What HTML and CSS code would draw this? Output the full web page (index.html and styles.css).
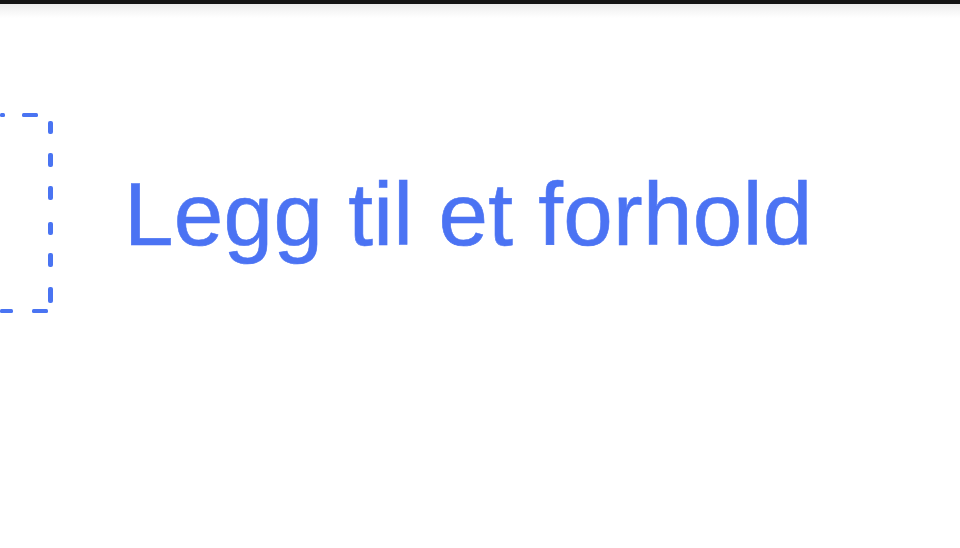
FILE: index.html
```html
<!DOCTYPE html>
<html lang="no">
<head>
<meta charset="utf-8">
<title>Legg til et forhold</title>
<link rel="stylesheet" href="styles.css">
</head>
<body>
<div class="topbar"></div>
<div class="band"></div>
<main class="row">
  <svg class="addbox" width="54" height="204" viewBox="0 0 54 204" aria-hidden="true">
    <g fill="#4a74f2">
      <rect x="0" y="1" width="5" height="4" rx="1.5"/>
      <rect x="22" y="1" width="16" height="4" rx="1.5"/>
      <rect x="48" y="9" width="5" height="13" rx="2"/>
      <rect x="48" y="41" width="5" height="14" rx="2"/>
      <rect x="48" y="74" width="5" height="14" rx="2"/>
      <rect x="48" y="110" width="5" height="13" rx="2"/>
      <rect x="48" y="141" width="5" height="14" rx="2"/>
      <rect x="48" y="175" width="5" height="16" rx="2"/>
      <rect x="0" y="197" width="13" height="4" rx="1.5"/>
      <rect x="32" y="197" width="16" height="4" rx="1.5"/>
    </g>
  </svg>
  <a class="addlink" href="#">Legg til et forhold</a>
</main>
</body>
</html>
```
FILE: styles.css
```css
html, body {
  margin: 0;
  padding: 0;
  background: #ffffff;
}
body {
  width: 960px;
  height: 548px;
  overflow: hidden;
  font-family: "Liberation Sans", Arial, sans-serif;
}
.topbar {
  height: 4px;
  background: #141414;
}
.band {
  height: 14px;
  background: linear-gradient(#ececec, #f8f8f8 60%, #ffffff);
}
.row {
  display: flex;
  align-items: flex-start;
  padding-top: 94px;
  gap: 70px;
}
.addbox {
  display: block;
  flex: none;
}
.addlink {
  margin-top: 58px;
  font-size: 89px;
  line-height: 89px;
  letter-spacing: 0.3px;
  color: #4b73f3;
  -webkit-text-stroke: 0.6px #4b73f3;
  text-decoration: none;
  white-space: nowrap;
}
```
